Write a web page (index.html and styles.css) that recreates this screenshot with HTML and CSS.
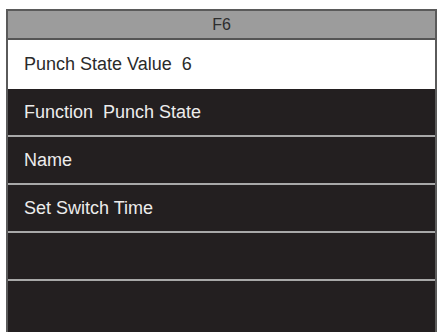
FILE: index.html
```html
<!DOCTYPE html>
<html>
<head>
<meta charset="utf-8">
<link rel="stylesheet" href="styles.css">
</head>
<body>
<div class="frame">
  <div class="header">F6</div>
  <div class="row row-selected">Punch State Value  6</div>
  <div class="row row-dark">Function  Punch State</div>
  <div class="row row-dark">Name</div>
  <div class="row row-dark">Set Switch Time</div>
  <div class="row row-dark"></div>
  <div class="row row-dark row-last"></div>
</div>
</body>
</html>
```
FILE: styles.css
```css
html, body {
  margin: 0;
  padding: 0;
  background: #ffffff;
  height: 332px;
  overflow: hidden;
}
body {
  padding: 9px 0 0 6px;
  box-sizing: border-box;
  font-family: "Liberation Sans", Arial, sans-serif;
}
.frame {
  width: 431px;
  box-sizing: border-box;
  border: 2px solid #5a5a5a;
  border-bottom: none;
  display: flex;
  flex-direction: column;
  background: #231f20;
}
.header {
  height: 27px;
  background: #9c9c9c;
  border-bottom: 2px solid #555555;
  color: #2e2e2e;
  font-size: 16px;
  display: flex;
  align-items: center;
  justify-content: center;
}
.row {
  white-space: pre;
  font-size: 18px;
  padding-left: 16px;
  display: flex;
  align-items: center;
  box-sizing: border-box;
}
.row-selected {
  height: 49px;
  background: #ffffff;
  color: #2a2a2a;
}
.row-dark {
  height: 48px;
  background: #231f20;
  color: #ececec;
  border-bottom: 2px solid #a8a8a8;
}
.row-last {
  height: 60px;
  border-bottom: none;
}
```
